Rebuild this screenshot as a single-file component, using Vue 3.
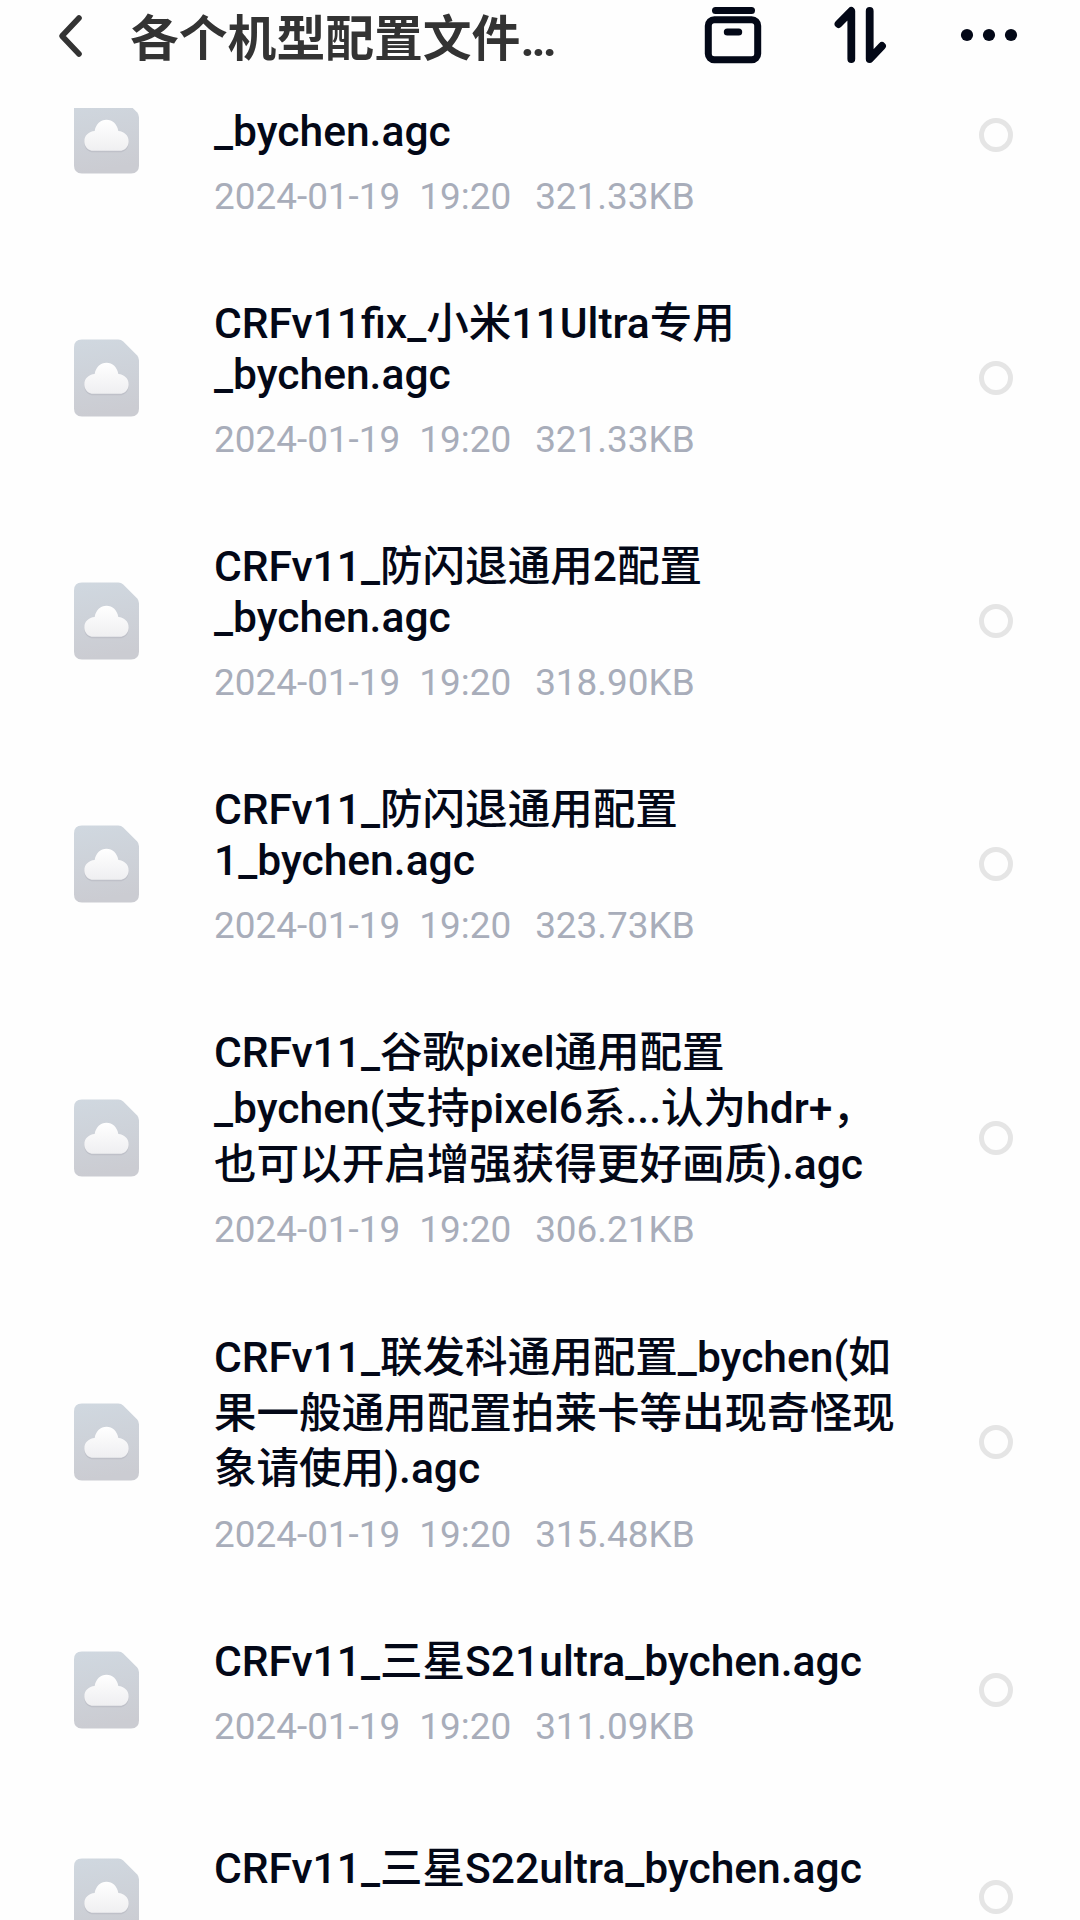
<template>
    <div class="page">
        <header class="header">
            <svg class="back" viewBox="0 0 28 48" width="28" height="48">
                <path d="M22 8 L5 26 L22 44" />
            </svg>
            <h1 class="title">各个机型配置文件<span class="dots">...</span></h1>
            <div class="actions">
                <svg class="icon" viewBox="0 0 60 60" width="60" height="60">
                    <path d="M12.5 5.5 H48.5" />
                    <rect x="5.3" y="14.8" width="49.4" height="39.9" rx="6" />
                    <path d="M24.3 27 H35.7" />
                </svg>
                <svg class="icon sort" viewBox="0 0 60 60" width="60" height="60">
                    <path d="M7.5 19 L20.3 6 V54" />
                    <path d="M38.7 6 V54 L51 41" />
                </svg>
                <svg class="more" viewBox="0 0 60 60" width="60" height="60">
                    <circle cx="8" cy="30" r="6.1" />
                    <circle cx="30" cy="30" r="6.1" />
                    <circle cx="52" cy="30" r="6.1" />
                </svg>
            </div>
        </header>
        <div class="viewport">
            <ul class="files">
                <li v-for="(file, i) of files" :key="i" class="file">
                    <div class="content">
                        <svg class="file-icon" viewBox="0 0 66 78" width="65" height="78">
                            <defs>
                                <linearGradient :id="`paper${i}`" x1="0" y1="0" x2="0.15" y2="1">
                                    <stop offset="0" stop-color="#d0d8e0" />
                                    <stop offset="1" stop-color="#cbccd2" />
                                </linearGradient>
                                <linearGradient :id="`cloud${i}`" x1="0" y1="0" x2="0" y2="1">
                                    <stop offset="0" stop-color="#ffffff" />
                                    <stop offset="1" stop-color="#efeff1" />
                                </linearGradient>
                            </defs>
                            <path :fill="`url(#paper${i})`" d="M8 0 H45 Q48 0 50 2 L64 16 Q66 18 66 21 V70 Q66 78 58 78 H8 Q0 78 0 70 V8 Q0 0 8 0 Z" />
                            <path class="shadow" :d="cloud" transform="translate(0 1.5)" />
                            <path :fill="`url(#cloud${i})`" :d="cloud" />
                        </svg>
                        <div class="info">
                            <div v-for="(line, n) of file.name" :key="n" class="line" :class="{ cjk: hasCjk(line) }">{{ line }}</div>
                            <div class="meta">
                                <span class="date">2024-01-19</span>
                                <span class="time">19:20</span>
                                <span>{{ file.size }}</span>
                            </div>
                        </div>
                        <div class="radio"></div>
                    </div>
                </li>
            </ul>
        </div>
    </div>
</template>
<script setup>
const cloud = 'M20 55 C14 55 10.5 50.5 10.5 45.5 C10.5 39.5 15 35.5 21 35 C22 28 27 23.5 33 23.5 C39 23.5 44 28 45 35 C51 35.5 55.5 39.5 55.5 45.5 C55.5 50.5 52 55 46 55 Z';

const files = [
    { name: ['', '_bychen.agc'], size: '321.33KB' },
    { name: ['CRFv11fix_小米11Ultra专用', '_bychen.agc'], size: '321.33KB' },
    { name: ['CRFv11_防闪退通用2配置', '_bychen.agc'], size: '318.90KB' },
    { name: ['CRFv11_防闪退通用配置', '1_bychen.agc'], size: '323.73KB' },
    { name: ['CRFv11_谷歌pixel通用配置', '_bychen(支持pixel6系...认为hdr+，', '也可以开启增强获得更好画质).agc'], size: '306.21KB' },
    { name: ['CRFv11_联发科通用配置_bychen(如', '果一般通用配置拍莱卡等出现奇怪现', '象请使用).agc'], size: '315.48KB' },
    { name: ['CRFv11_三星S21ultra_bychen.agc'], size: '311.09KB' },
    { name: ['CRFv11_三星S22ultra_bychen.agc'], size: '311.09KB' }
];

// lines with Chinese characters sit a little further apart
function hasCjk(line) {
    return /[\u4e00-\u9fff]/.test(line);
}
</script>
<style>
body {
    background-color: #fefefe;
}
</style>
<style scoped>
.page {
    display: flex;
    flex-direction: column;
    width: 1080px;
    height: 1920px;
    overflow: hidden;
    background-color: #fefefe;
    font-family: Roboto, "Noto Sans CJK SC", sans-serif;
}

/* HEADER */

.header {
    display: flex;
    flex: none;
    box-sizing: border-box;
    height: 108px;
    padding: 0 61px 0 57px;
}

.back {
    margin-top: 10px;
    fill: none;
    stroke: #333;
    stroke-width: 5.6;
    stroke-linecap: round;
    stroke-linejoin: round;
}

.title {
    flex: 1;
    margin: 3px 0 0 45px;
    font-size: 48.8px;
    line-height: 74px;
    font-weight: 700;
    color: #333;
    white-space: nowrap;
}

.dots {
    letter-spacing: -3px;
}

.actions {
    display: flex;
    gap: 68px;
    margin-top: 5px;
}

.icon {
    fill: none;
    stroke: #030817;
    stroke-width: 7;
    stroke-linecap: round;
    stroke-linejoin: round;
}

.icon.sort {
    stroke-width: 7.8;
}

.more {
    fill: #030817;
}

/* LIST */

.viewport {
    flex: 1;
    min-height: 0;
    overflow: hidden;
}

.files {
    margin: -53px 0 0;
    padding: 0;
    list-style-type: none;
}

.file {
    box-sizing: border-box;
    min-height: 207px;
    padding: 0 67px 82.8px 74px;
}

.content {
    display: flex;
    align-items: center;
}

.file-icon {
    flex: none;
    margin-right: 75px;
}

.shadow {
    fill: #b9bbc3;
    opacity: 0.7;
}

.info {
    flex: 1;
    padding-top: 1.5px;
}

.line {
    min-height: 50.5px;
    font-size: 42.55px;
    line-height: 50.5px;
    font-weight: 500;
    color: #030817;
    white-space: nowrap;
}

.line.cjk + .line.cjk {
    margin-top: 5.4px;
}

.meta {
    display: flex;
    margin-top: 21.7px;
    font-size: 36.9px;
    line-height: 36px;
    color: #a8adba;
    white-space: nowrap;
}

.date {
    margin-right: 19px;
}

.time {
    margin-right: 24px;
}

.radio {
    box-sizing: border-box;
    width: 34px;
    height: 34px;
    border: 5px solid #e5e5e5;
    border-radius: 50%;
}
</style>
